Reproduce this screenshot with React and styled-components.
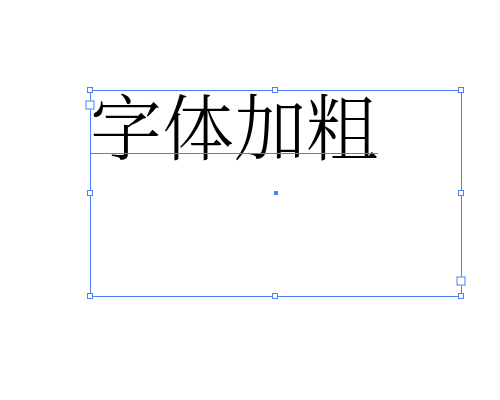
import React from "react";
import styled, { createGlobalStyle } from "styled-components";

const Global = createGlobalStyle`
  html, body {
    margin: 0;
    padding: 0;
    background: #ffffff;
  }
`;

const BLUE = "#4d7ef7";

const Canvas = styled.div`
  position: relative;
  width: 500px;
  height: 400px;
  background: #ffffff;
  overflow: hidden;
`;

const Frame = styled.div`
  position: absolute;
  left: 90px;
  top: 90px;
  width: 372px;
  height: 207px;
  border: 1px solid ${BLUE};
  box-sizing: border-box;
`;

const TextLine = styled.span`
  position: relative;
  display: inline-block;
  font-family: "Noto Serif CJK SC", "Noto Sans CJK SC", serif;
  font-size: 72px;
  line-height: 72px;
  font-weight: 300;
  color: #000000;
  white-space: nowrap;
  margin-top: -4px;
  margin-left: -1px;

  &::after {
    content: "";
    position: absolute;
    left: 0;
    right: 0;
    top: 66px;
    height: 1px;
    background: ${BLUE};
  }
`;

const Handle = styled.div`
  position: absolute;
  width: 4px;
  height: 4px;
  background: #ffffff;
  border: 1px solid ${BLUE};
  left: ${(p) => p.$x}px;
  top: ${(p) => p.$y}px;
  transform: translate(-50%, -50%);
`;

const Port = styled.div`
  position: absolute;
  width: 7px;
  height: 7px;
  background: #ffffff;
  border: 1px solid ${BLUE};
  left: ${(p) => p.$x}px;
  top: ${(p) => p.$y}px;
  transform: translate(-50%, -50%);
`;

const Center = styled.div`
  position: absolute;
  left: 274px;
  top: 191px;
  width: 4px;
  height: 4px;
  background: ${BLUE};
`;

const handles = [
  [90, 90], [275, 90], [461, 90],
  [90, 193], [461, 193],
  [90, 296], [275, 296], [461, 296],
];

export default function App() {
  return (
    <Canvas>
      <Global />
      <Frame>
        <TextLine>字体加粗</TextLine>
      </Frame>
      {handles.map(([x, y]) => (
        <Handle key={`${x}-${y}`} $x={x} $y={y} />
      ))}
      <Port $x={90} $y={105} />
      <Port $x={461} $y={281} />
      <Center />
    </Canvas>
  );
}
